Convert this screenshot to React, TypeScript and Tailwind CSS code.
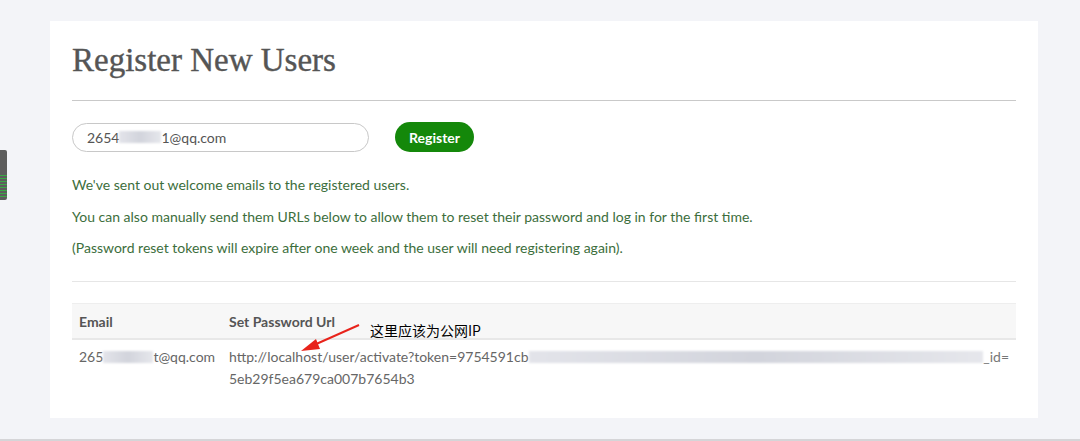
import React from "react";

const lato = { fontFamily: "Lato, 'Noto Sans', sans-serif" };

function Blur({ w, className = "" }: { w: number; className?: string }) {
  // pixelated blur that hides part of an address
  return (
    <span
      className={`inline-block h-[12px] align-middle bg-gradient-to-r from-[#e3e4ea] via-[#d2d4dc] to-[#e6e7ec] blur-[1px] ${className}`}
      style={{ width: w }}
    />
  );
}

export default function App() {
  return (
    <div
      className="relative h-[441px] w-[1080px] overflow-hidden bg-[#f3f4f8] border-b-2 border-[#d5d5d8] pt-[21px] pl-[50px]"
      style={lato}
    >
      {/* left edge widget */}
      <div className="absolute left-0 top-[150px] h-[50px] w-[7px] rounded-r-[2px] bg-[#5d5d5d] overflow-hidden flex flex-col justify-end pb-[3px]">
        <div className="h-[22px] w-full bg-[repeating-linear-gradient(to_bottom,#3aa845_0px,#3aa845_1px,#5d5d5d_1px,#5d5d5d_3px)]" />
      </div>

      <div className="w-[988px] h-[397px] bg-white px-[22px] pt-[19px]">
        <h1
          className="text-[33px] leading-[40px] text-[#555] mb-[20px] [-webkit-text-stroke:0.4px_#555]"
          style={{ fontFamily: "'Liberation Serif', 'DejaVu Serif', serif" }}
        >
          Register New Users
        </h1>
        <div className="h-px bg-[#c9c9c9]" />

        <div className="mt-[21px] flex items-center gap-[26px] h-[30px]">
          <div className="w-[297px] h-[29px] rounded-full border border-[#c8c8c8] flex items-center pl-[14px] text-[14px] text-[#555]">
            <span>2654</span>
            <Blur w={42} />
            <span>1@qq.com</span>
          </div>
          <button className="h-[30px] w-[79px] rounded-full bg-[#14880a] text-white font-bold text-[14px]">
            Register
          </button>
        </div>

        <div className="mt-[23px] flex flex-col gap-[11.5px] text-[14px] leading-5 text-[#3c6e3c]">
          <p>We've sent out welcome emails to the registered users.</p>
          <p>You can also manually send them URLs below to allow them to reset their password and log in for the first time.</p>
          <p>(Password reset tokens will expire after one week and the user will need registering again).</p>
        </div>

        <div className="mt-[23px] h-px bg-[#e6e6e6]" />

        <div className="mt-[21px] text-[14px] text-[#666]">
          <div className="flex h-[37px] items-center bg-[#f7f7f7] border-t border-[#eeeeee] border-b-2 border-b-[#e8e8e8] font-bold text-[#555]">
            <div className="w-[150px] pl-[7px]">Email</div>
            <div className="pl-[7px]">Set Password Url</div>
          </div>
          <div className="flex pt-[6px] leading-[22px]">
            <div className="w-[150px] pl-[7px] flex items-center h-[22px]">
              <span>265</span>
              <Blur w={50} />
              <span>t@qq.com</span>
            </div>
            <div className="flex-1 pl-[7px] pr-[7px]">
              <div className="flex items-center">
                <span>http://localhost/user/activate?token=9754591cb</span>
                <Blur w={430} className="flex-1" />
                <span className="text-[#777]">_id=</span>
              </div>
              <div>5eb29f5ea679ca007b7654b3</div>
            </div>
          </div>
        </div>
      </div>

      {/* annotation */}
      <svg className="absolute left-0 top-0" width="1080" height="441">
        <line x1="359" y1="325" x2="314" y2="345" stroke="#e8231b" strokeWidth="2" />
        <polygon points="301,351 316,339 320,349" fill="#e8231b" />
      </svg>
      <div
        className="absolute left-[370px] top-[320px] text-[14px] leading-5 text-black"
        style={{ fontFamily: "'Noto Sans CJK SC', sans-serif" }}
      >
        这里应该为公网IP
      </div>
    </div>
  );
}
